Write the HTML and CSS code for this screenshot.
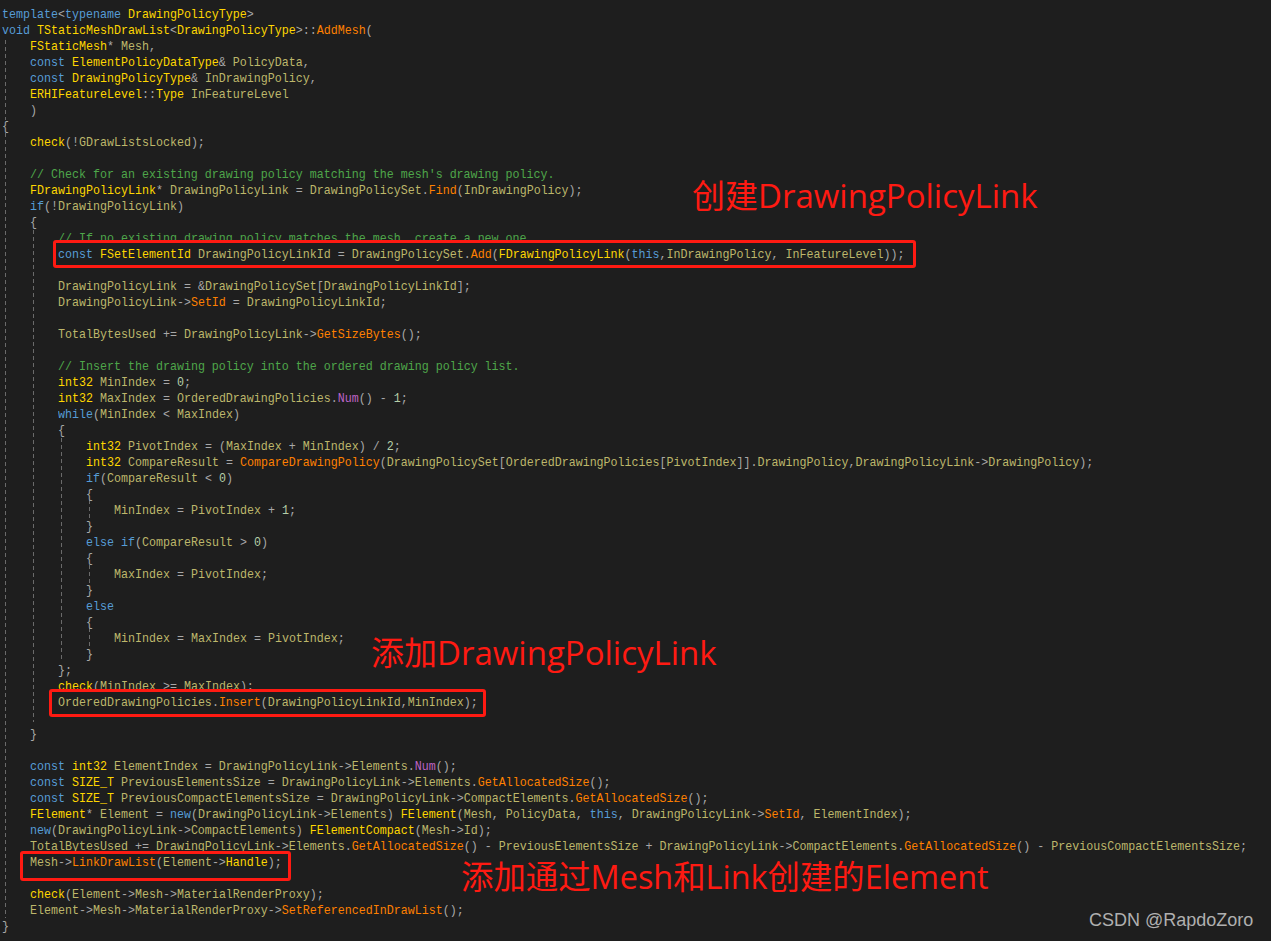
FILE: index.html
```html
<!DOCTYPE html>
<html lang="zh">
<head>
<meta charset="utf-8">
<title>AddMesh</title>
<link rel="stylesheet" href="styles.css">
</head>
<body>
<main class="page">
<svg class="guides" width="1271" height="941" aria-hidden="true">
<path d="M5.5 40V120M5.5 133V918M33.5 230V722M61.5 438V660M89.5 500V518M89.5 565V583M89.5 628V648"/>
</svg>
<div class="box box-a"></div>
<div class="box box-b"></div>
<div class="box box-c"></div>
<div class="code">
<div class="row"><code><i class="k">template</i><i class="p">&lt;</i><i class="k">typename</i> <i class="t">DrawingPolicyType</i><i class="p">&gt;</i></code></div>
<div class="row"><code><i class="k">void</i> <i class="t">TStaticMeshDrawList</i><i class="p">&lt;</i><i class="t">DrawingPolicyType</i><i class="p">&gt;::</i><i class="f">AddMesh</i><i class="p">(</i></code></div>
<div class="row i1"><code><i class="t">FStaticMesh</i><i class="p">*</i> Mesh<i class="p">,</i></code></div>
<div class="row i1"><code><i class="k">const</i> <i class="t">ElementPolicyDataType</i><i class="p">&amp;</i> PolicyData<i class="p">,</i></code></div>
<div class="row i1"><code><i class="k">const</i> <i class="t">DrawingPolicyType</i><i class="p">&amp;</i> InDrawingPolicy<i class="p">,</i></code></div>
<div class="row i1"><code><i class="t">ERHIFeatureLevel</i><i class="p">::</i><i class="t">Type</i> InFeatureLevel</code></div>
<div class="row i1"><code><i class="p">)</i></code></div>
<div class="row"><code><i class="p">{</i></code></div>
<div class="row i1"><code><i class="t">check</i><i class="p">(!</i>GDrawListsLocked<i class="p">);</i></code></div>
<div class="row"></div>
<div class="row i1"><code><i class="c">// Check for an existing drawing policy matching the mesh's drawing policy.</i></code></div>
<div class="row i1"><code><i class="t">FDrawingPolicyLink</i><i class="p">*</i> DrawingPolicyLink <i class="p">=</i> DrawingPolicySet<i class="p">.</i><i class="f">Find</i><i class="p">(</i>InDrawingPolicy<i class="p">);</i></code></div>
<div class="row i1"><code><i class="k">if</i><i class="p">(!</i>DrawingPolicyLink<i class="p">)</i></code></div>
<div class="row i1"><code><i class="p">{</i></code></div>
<div class="row i2"><code><i class="c">// If no existing drawing policy matches the mesh, create a new one.</i></code></div>
<div class="row i2 over"><code><i class="k">const</i> <i class="t">FSetElementId</i> DrawingPolicyLinkId <i class="p">=</i> DrawingPolicySet<i class="p">.</i><i class="f">Add</i><i class="p">(</i><i class="t">FDrawingPolicyLink</i><i class="p">(</i><i class="k">this</i><i class="p">,</i>InDrawingPolicy<i class="p">,</i> InFeatureLevel<i class="p">));</i></code></div>
<div class="row"></div>
<div class="row i2"><code>DrawingPolicyLink <i class="p">= &amp;</i>DrawingPolicySet<i class="p">[</i>DrawingPolicyLinkId<i class="p">];</i></code></div>
<div class="row i2"><code>DrawingPolicyLink<i class="p">-&gt;</i><i class="f">SetId</i> <i class="p">=</i> DrawingPolicyLinkId<i class="p">;</i></code></div>
<div class="row"></div>
<div class="row i2"><code>TotalBytesUsed <i class="p">+=</i> DrawingPolicyLink<i class="p">-&gt;</i><i class="f">GetSizeBytes</i><i class="p">();</i></code></div>
<div class="row"></div>
<div class="row i2"><code><i class="c">// Insert the drawing policy into the ordered drawing policy list.</i></code></div>
<div class="row i2"><code><i class="t">int32</i> MinIndex <i class="p">=</i> <i class="d">0</i><i class="p">;</i></code></div>
<div class="row i2"><code><i class="t">int32</i> MaxIndex <i class="p">=</i> OrderedDrawingPolicies<i class="p">.</i><i class="n">Num</i><i class="p">() -</i> <i class="d">1</i><i class="p">;</i></code></div>
<div class="row i2"><code><i class="k">while</i><i class="p">(</i>MinIndex <i class="p">&lt;</i> MaxIndex<i class="p">)</i></code></div>
<div class="row i2"><code><i class="p">{</i></code></div>
<div class="row i3"><code><i class="t">int32</i> PivotIndex <i class="p">= (</i>MaxIndex <i class="p">+</i> MinIndex<i class="p">) /</i> <i class="d">2</i><i class="p">;</i></code></div>
<div class="row i3"><code><i class="t">int32</i> CompareResult <i class="p">=</i> <i class="f">CompareDrawingPolicy</i><i class="p">(</i>DrawingPolicySet<i class="p">[</i>OrderedDrawingPolicies<i class="p">[</i>PivotIndex<i class="p">]].</i>DrawingPolicy<i class="p">,</i>DrawingPolicyLink<i class="p">-&gt;</i>DrawingPolicy<i class="p">);</i></code></div>
<div class="row i3"><code><i class="k">if</i><i class="p">(</i>CompareResult <i class="p">&lt;</i> <i class="d">0</i><i class="p">)</i></code></div>
<div class="row i3"><code><i class="p">{</i></code></div>
<div class="row i4"><code>MinIndex <i class="p">=</i> PivotIndex <i class="p">+</i> <i class="d">1</i><i class="p">;</i></code></div>
<div class="row i3"><code><i class="p">}</i></code></div>
<div class="row i3"><code><i class="k">else if</i><i class="p">(</i>CompareResult <i class="p">&gt;</i> <i class="d">0</i><i class="p">)</i></code></div>
<div class="row i3"><code><i class="p">{</i></code></div>
<div class="row i4"><code>MaxIndex <i class="p">=</i> PivotIndex<i class="p">;</i></code></div>
<div class="row i3"><code><i class="p">}</i></code></div>
<div class="row i3"><code><i class="k">else</i></code></div>
<div class="row i3"><code><i class="p">{</i></code></div>
<div class="row i4"><code>MinIndex <i class="p">=</i> MaxIndex <i class="p">=</i> PivotIndex<i class="p">;</i></code></div>
<div class="row i3"><code><i class="p">}</i></code></div>
<div class="row i2"><code><i class="p">};</i></code></div>
<div class="row i2"><code><i class="t">check</i><i class="p">(</i>MinIndex <i class="p">&gt;=</i> MaxIndex<i class="p">);</i></code></div>
<div class="row i2 over"><code>OrderedDrawingPolicies<i class="p">.</i><i class="f">Insert</i><i class="p">(</i>DrawingPolicyLinkId<i class="p">,</i>MinIndex<i class="p">);</i></code></div>
<div class="row"></div>
<div class="row i1"><code><i class="p">}</i></code></div>
<div class="row"></div>
<div class="row i1"><code><i class="k">const</i> <i class="t">int32</i> ElementIndex <i class="p">=</i> DrawingPolicyLink<i class="p">-&gt;</i>Elements<i class="p">.</i><i class="n">Num</i><i class="p">();</i></code></div>
<div class="row i1"><code><i class="k">const</i> <i class="t">SIZE_T</i> PreviousElementsSize <i class="p">=</i> DrawingPolicyLink<i class="p">-&gt;</i>Elements<i class="p">.</i><i class="f">GetAllocatedSize</i><i class="p">();</i></code></div>
<div class="row i1"><code><i class="k">const</i> <i class="t">SIZE_T</i> PreviousCompactElementsSize <i class="p">=</i> DrawingPolicyLink<i class="p">-&gt;</i>CompactElements<i class="p">.</i><i class="f">GetAllocatedSize</i><i class="p">();</i></code></div>
<div class="row i1"><code><i class="t">FElement</i><i class="p">*</i> Element <i class="p">=</i> <i class="k">new</i><i class="p">(</i>DrawingPolicyLink<i class="p">-&gt;</i>Elements<i class="p">)</i> <i class="t">FElement</i><i class="p">(</i>Mesh<i class="p">,</i> PolicyData<i class="p">,</i> <i class="k">this</i><i class="p">,</i> DrawingPolicyLink<i class="p">-&gt;</i><i class="f">SetId</i><i class="p">,</i> ElementIndex<i class="p">);</i></code></div>
<div class="row i1"><code><i class="k">new</i><i class="p">(</i>DrawingPolicyLink<i class="p">-&gt;</i>CompactElements<i class="p">)</i> <i class="t">FElementCompact</i><i class="p">(</i>Mesh<i class="p">-&gt;</i>Id<i class="p">);</i></code></div>
<div class="row i1"><code>TotalBytesUsed <i class="p">+=</i> DrawingPolicyLink<i class="p">-&gt;</i>Elements<i class="p">.</i><i class="f">GetAllocatedSize</i><i class="p">() -</i> PreviousElementsSize <i class="p">+</i> DrawingPolicyLink<i class="p">-&gt;</i>CompactElements<i class="p">.</i><i class="f">GetAllocatedSize</i><i class="p">() -</i> PreviousCompactElementsSize<i class="p">;</i></code></div>
<div class="row i1 over"><code>Mesh<i class="p">-&gt;</i><i class="f">LinkDrawList</i><i class="p">(</i>Element<i class="p">-&gt;</i><i class="t">Handle</i><i class="p">);</i></code></div>
<div class="row"></div>
<div class="row i1"><code><i class="t">check</i><i class="p">(</i>Element<i class="p">-&gt;</i>Mesh<i class="p">-&gt;</i>MaterialRenderProxy<i class="p">);</i></code></div>
<div class="row i1"><code>Element<i class="p">-&gt;</i>Mesh<i class="p">-&gt;</i>MaterialRenderProxy<i class="p">-&gt;</i><i class="f">SetReferencedInDrawList</i><i class="p">();</i></code></div>
<div class="row"><code><i class="p">}</i></code></div>
</div>
<p class="note note-a">创建DrawingPolicyLink</p>
<p class="note note-b">添加DrawingPolicyLink</p>
<p class="note note-c">添加通过Mesh和Link创建的Element</p>
<p class="mark">CSDN @RapdoZoro</p>
</main>
</body>
</html>
```
FILE: styles.css
```css
html, body {
  margin: 0;
  height: 100%;
  background: #1e1e1e;
  overflow: hidden;
}
.page {
  position: relative;
  width: 1271px;
  height: 941px;
  overflow: hidden;
  background: #1e1e1e;
}
.code {
  padding: 7px 0 0 2px;
  font: 13px/16px "Liberation Mono", monospace;
  color: #bdb76b;
}
.row {
  height: 16px;
  white-space: pre;
}
.row code {
  display: block;
  font: inherit;
  transform: scaleX(0.8965);
  transform-origin: left center;
}
.i1 { padding-left: 28px; }
.i2 { padding-left: 56px; }
.i3 { padding-left: 84px; }
.i4 { padding-left: 112px; }
.over {
  position: relative;
  z-index: 2;
}
i { font-style: normal; }
.k { color: #569cd6; }
.t { color: #ffd700; }
.f { color: #ff8000; }
.c { color: #4ea64a; }
.n { color: #bd63c5; }
.p { color: #a8a8a8; }
.d { color: #b5cea8; }
.guides {
  position: absolute;
  left: 0;
  top: 0;
  fill: none;
  stroke: #6a6a6a;
  stroke-width: 1;
  stroke-dasharray: 4 3;
}
.box {
  position: absolute;
  z-index: 1;
  box-sizing: border-box;
  background: #1e1e1e;
  border: 3px solid #ff1a12;
  border-radius: 3px;
}
.box-a { left: 53px; top: 240px; width: 863px; height: 28px; }
.box-b { left: 49px; top: 689px; width: 437px; height: 28px; }
.box-c { left: 20px; top: 851px; width: 271px; height: 30px; }
.note {
  position: absolute;
  z-index: 3;
  margin: 0;
  font: 33px/44px "Open Sans", "Noto Sans CJK SC", sans-serif;
  color: #ff1a12;
  white-space: nowrap;
}
.note-a { left: 692px; top: 174px; }
.note-b { left: 371px; top: 631px; }
.note-c { left: 461px; top: 854px; font-size: 32.4px; }
.mark {
  position: absolute;
  z-index: 3;
  left: 1089px;
  top: 909px;
  margin: 0;
  font: 18px/22px "Liberation Sans", sans-serif;
  color: #b0b0b0;
  white-space: nowrap;
}
```
